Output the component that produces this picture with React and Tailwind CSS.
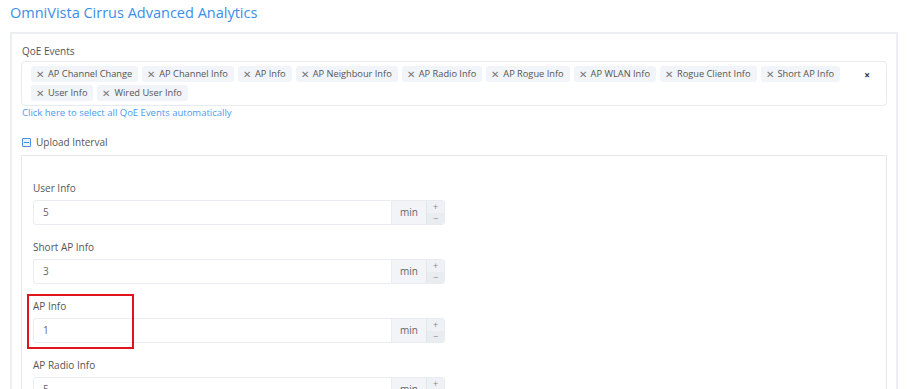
import React from "react";

const events = [
  "AP Channel Change",
  "AP Channel Info",
  "AP Info",
  "AP Neighbour Info",
  "AP Radio Info",
  "AP Rogue Info",
  "AP WLAN Info",
  "Rogue Client Info",
  "Short AP Info",
  "User Info",
  "Wired User Info",
];

const intervals = [
  { label: "User Info", value: "5" },
  { label: "Short AP Info", value: "3" },
  { label: "AP Info", value: "1", marked: true },
  { label: "AP Radio Info", value: "5" },
];

function Tag({ text }) {
  return (
    <span className="flex items-center h-[16px] pl-[5px] pr-[6px] gap-[4px] rounded-[3px] bg-[#f1f4f8] text-[9.25px] text-[#555]">
      <span className="text-[10px] leading-none text-[#777]">✕</span>
      {text}
    </span>
  );
}

function IntervalField({ label, value, marked }) {
  return (
    <div className="relative mb-[15px]">
      {marked && (
        <div className="absolute left-[-6px] top-[-5px] w-[107px] h-[55px] border-2 border-[#e0141e] pointer-events-none z-10" />
      )}
      <div className="h-[14px] leading-[14px] mb-[5px] text-[#555]">{label}</div>
      <div className="flex w-[412px] h-[25px] border border-[#e9ecf0] rounded-[3px] overflow-hidden">
        <div className="flex-1 flex items-center pl-[9px] text-[#666]">{value}</div>
        <div className="w-[35px] flex items-center justify-center bg-[#f2f4f7] border-l border-[#e9ecf0] text-[#666]">
          min
        </div>
        <div className="w-[18px] flex flex-col bg-[#eef1f5] border-l border-[#e3e6ea] text-[#888] text-[9px] leading-none">
          <span className="h-[12px] flex items-center justify-center">+</span>
          <span className="h-[12px] flex items-center justify-center bg-[#e9edf2]">−</span>
        </div>
      </div>
    </div>
  );
}

export default function App() {
  return (
    <div className="w-[907px] h-[389px] overflow-hidden bg-white font-['Open_Sans',sans-serif] text-[10px]">
      <h1 className="h-[32px] pl-[10px] pt-[3px] text-[14.5px] leading-[20px] text-[#3b8eea]">
        OmniVista Cirrus Advanced Analytics
      </h1>

      <div className="ml-[10px] w-[888px] h-[400px] border-2 border-[#eceef1] px-[9px] pt-[9px]">
        <div className="h-[16px] leading-[16px] mb-[2px] pl-[1px] text-[#555]">QoE Events</div>

        <div className="relative flex flex-wrap content-start gap-x-[4px] gap-y-[3px] w-[866px] border border-[#e7eaee] rounded-[4px] pl-[9px] pr-[24px] pt-[4px] pb-[4px]">
          {events.map((e) => (
            <Tag key={e} text={e} />
          ))}
          <span className="absolute right-[16px] top-[6px] text-[10px] font-bold text-[#333]">×</span>
        </div>

        <div className="h-[14px] leading-[14px] mt-[0px] pl-[1px] text-[9.5px] text-[#4b9af0]">
          Click here to select all QoE Events automatically
        </div>

        <div className="flex items-center gap-[5px] mt-[15px] h-[14px] pl-[1px] text-[#555]">
          <span className="w-[9px] h-[9px] border border-[#4a90e2] rounded-[1px] flex items-center justify-center bg-[#eaf2fd]">
            <span className="w-[5px] h-[1px] bg-[#4a90e2]" />
          </span>
          Upload Interval
        </div>

        <div className="mt-[6px] w-[866px] h-[300px] border border-[#e5e7ea] pl-[11px] pt-[25px]">
          {intervals.map((f) => (
            <IntervalField key={f.label} {...f} />
          ))}
        </div>
      </div>
    </div>
  );
}
